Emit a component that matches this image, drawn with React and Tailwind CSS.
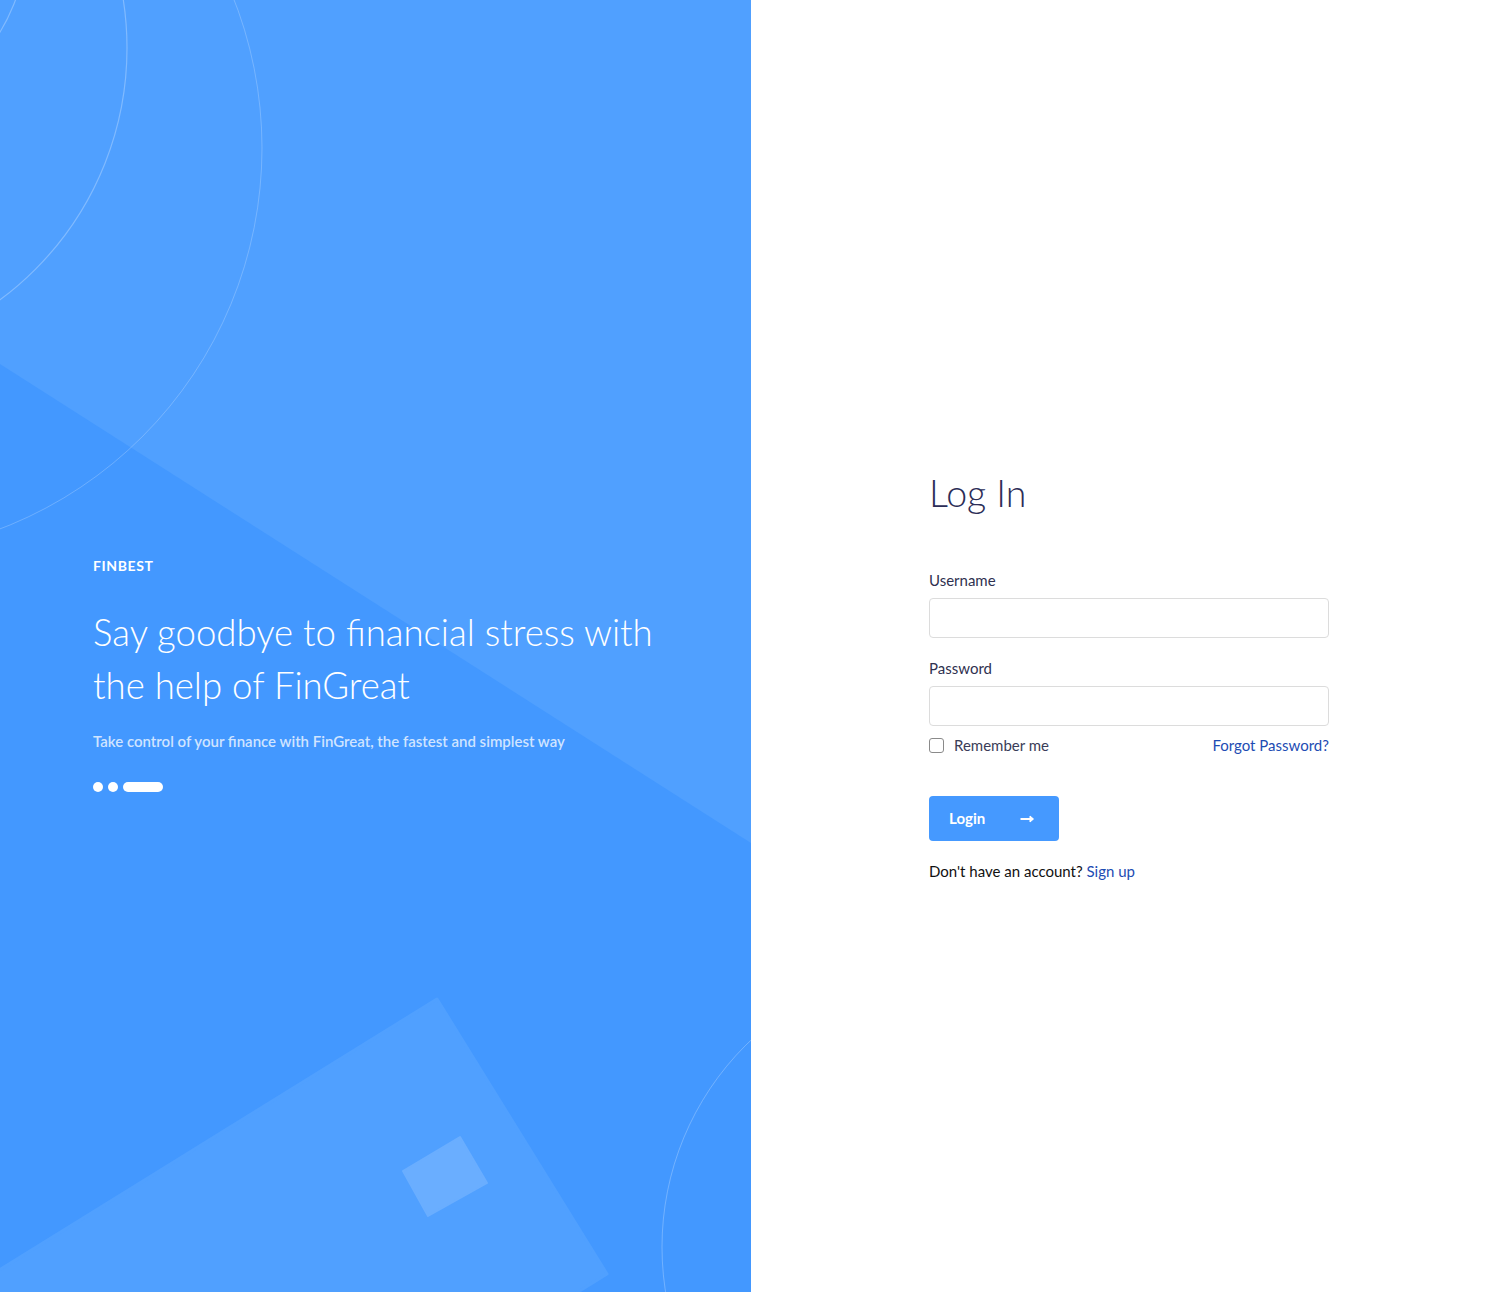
import React from "react";

function Decorations() {
  return (
    <svg
      className="absolute inset-0"
      width="751"
      height="1292"
      viewBox="0 0 751 1292"
      fill="none"
    >
      <polygon points="0,0 751,0 751,843 0,364" fill="#50A0FF" />
      <circle cx="-150" cy="-60" r="176" stroke="rgba(255,255,255,0.28)" strokeWidth="1.2" />
      <circle cx="-186" cy="48" r="313" stroke="rgba(255,255,255,0.28)" strokeWidth="1.2" />
      <circle cx="-146" cy="148" r="408" stroke="rgba(255,255,255,0.22)" strokeWidth="1" />
      <polygon
        points="437,999 607,1274 -243,1800 -413,1525"
        fill="#50A0FF"
        stroke="#50A0FF"
        strokeWidth="3"
        strokeLinejoin="round"
      />
      <polygon
        points="460,1137 487,1183 428,1216 403,1171"
        fill="#6AAEFF"
        stroke="#6AAEFF"
        strokeWidth="2"
        strokeLinejoin="round"
      />
      <circle cx="947" cy="1247" r="285" stroke="rgba(255,255,255,0.25)" strokeWidth="1" />
    </svg>
  );
}

function ArrowIcon() {
  return (
    <svg width="15" height="10" viewBox="0 0 15 10" fill="none">
      <path d="M0.5 5H13" stroke="white" strokeWidth="2" />
      <path d="M10 2L13.5 5L10 8Z" fill="white" stroke="white" strokeWidth="1" strokeLinejoin="round" />
    </svg>
  );
}

export default function App() {
  return (
    <div
      className="flex w-[1501px] h-[1292px] overflow-hidden bg-white"
      style={{ fontFamily: "Lato, 'Open Sans', sans-serif" }}
    >
      {/* Left panel */}
      <div className="relative w-[751px] h-[1292px] shrink-0 overflow-hidden bg-[#4398FF]">
        <Decorations />
        <div className="relative pl-[93px] pt-[556px]">
          <div className="text-[14px] leading-[20px] font-bold text-white tracking-[0.6px]">
            FINBEST
          </div>
          <h1 className="mt-[30px] text-[36.6px] leading-[53px] font-light text-white">
            Say goodbye to financial stress with
            <br />
            the help of FinGreat
          </h1>
          <p className="mt-[19px] text-[15px] leading-[20px] font-semibold text-white/75">
            Take control of your finance with FinGreat, the fastest and simplest way
          </p>
          <div className="mt-[31px] flex items-center gap-[5px]">
            <span className="block w-[10px] h-[10px] rounded-full bg-white" />
            <span className="block w-[10px] h-[10px] rounded-full bg-white" />
            <span className="block w-[40px] h-[10px] rounded-full bg-white" />
          </div>
        </div>
      </div>

      {/* Right panel */}
      <div className="flex-1 h-[1292px] bg-white pl-[178px] pt-[469px]">
        <div className="w-[400px]">
          <h2 className="text-[37.5px] leading-[48px] font-light text-[#2c2d57]">Log In</h2>

          <label className="block mt-[53px] text-[15px] leading-[20px] text-[#2f3150]">
            Username
          </label>
          <input
            type="text"
            className="mt-[8px] block w-[400px] h-[40px] rounded-[4px] border border-[#dcdcdc] bg-white px-3 outline-none"
          />

          <label className="block mt-[20px] text-[15px] leading-[20px] text-[#2f3150]">
            Password
          </label>
          <input
            type="password"
            className="mt-[8px] block w-[400px] h-[40px] rounded-[4px] border border-[#dcdcdc] bg-white px-3 outline-none"
          />

          <div className="mt-[9px] flex items-center justify-between h-[20px]">
            <label className="flex items-center gap-[10px] text-[15px] leading-[20px] text-[#3a3c58]">
              <span className="block w-[15px] h-[15px] rounded-[3px] border border-[#8a8a8a] bg-white" />
              Remember me
            </label>
            <a className="text-[15px] leading-[20px] text-[#1d4cb3]">Forgot Password?</a>
          </div>

          <button className="mt-[41px] flex items-center justify-between w-[130px] h-[45px] rounded-[4px] bg-[#4599FF] pl-[20px] pr-[24px] text-[15px] font-bold text-white">
            <span>Login</span>
            <ArrowIcon />
          </button>

          <p className="mt-[20px] text-[15px] leading-[20px] text-[#111111]">
            Don't have an account? <a className="text-[#1d4cb3]">Sign up</a>
          </p>
        </div>
      </div>
    </div>
  );
}
